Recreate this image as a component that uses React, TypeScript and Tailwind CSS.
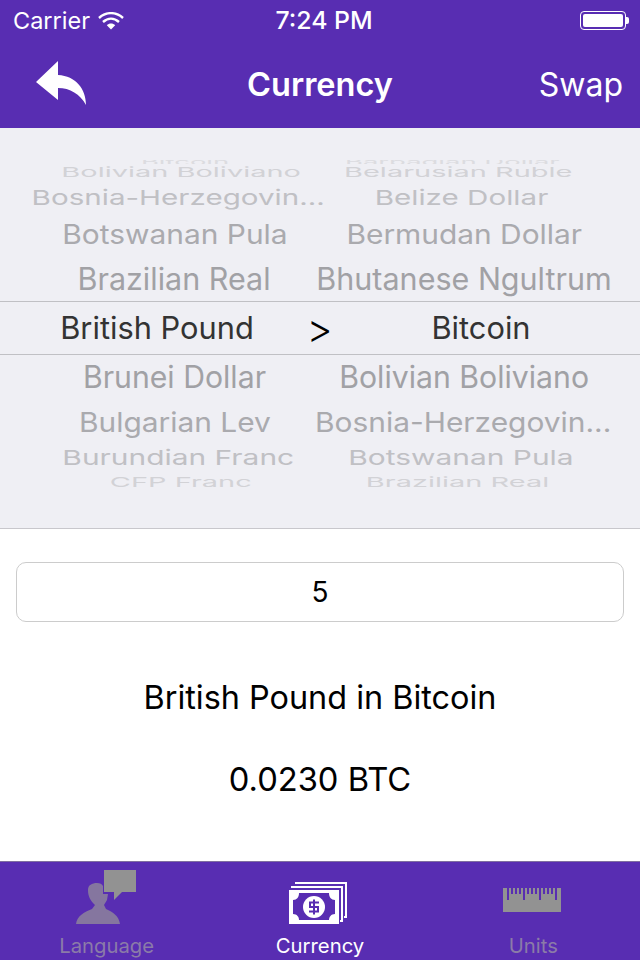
const rowsAbove = [
  { left: "Bitcoin", right: "Barbadian Dollar", row: "h-[4px]", text: "scale-x-[0.9] scale-y-[0.3] text-[#dcdce0]", l: "translate-x-[10px]", r: "-translate-x-[12px]" },
  { left: "Bolivian Boliviano", right: "Belarusian Ruble", row: "h-[16px]", text: "scale-x-[0.95] scale-y-[0.45] text-[#d2d2d6]", l: "translate-x-[6px]", r: "-translate-x-[6px]" },
  { left: "Bosnia-Herzegovin...", right: "Belize Dollar", row: "h-[36px]", text: "scale-x-[0.97] scale-y-[0.68] text-[#c0c0c4]", l: "translate-x-[3px]", r: "-translate-x-[3px]" },
  { left: "Botswanan Pula", right: "Bermudan Dollar", row: "h-[36px]", text: "scale-x-[0.98] scale-y-[0.88] text-[#aaaaae]", l: "", r: "" },
  { left: "Brazilian Real", right: "Bhutanese Ngultrum", row: "h-[44px] mt-[5px]", text: "text-[#a1a1a5]", l: "-translate-x-[1px]", r: "" },
];

const rowsBelow = [
  { left: "Brunei Dollar", right: "Bolivian Boliviano", row: "h-[44px]", text: "scale-x-[0.99] text-[#a1a1a5]", l: "-translate-x-[1px]", r: "" },
  { left: "Bulgarian Lev", right: "Bosnia-Herzegovin...", row: "h-[46px]", text: "scale-x-[0.98] scale-y-[0.9] text-[#aaaaae]", l: "", r: "-translate-x-[1px]" },
  { left: "Burundian Franc", right: "Botswanan Pula", row: "h-[26px]", text: "scale-x-[0.98] scale-y-[0.68] text-[#c0c0c4]", l: "translate-x-[3px]", r: "-translate-x-[3px]" },
  { left: "CFP Franc", right: "Brazilian Real", row: "h-[22px]", text: "scale-x-[0.95] scale-y-[0.45] text-[#d2d2d6]", l: "translate-x-[6px]", r: "-translate-x-[6px]" },
];

type Row = (typeof rowsAbove)[number];

const WheelRow = ({ row }: { row: Row }) => (
  <div className={`flex items-center overflow-hidden ${row.row}`}>
    <div className="w-1/2 flex justify-center pl-[30px] whitespace-nowrap">
      <span className={`text-[30.5px] leading-[34px] ${row.text} ${row.l}`}>{row.left}</span>
    </div>
    <div className="w-1/2 flex justify-center pr-[32px] whitespace-nowrap">
      <span className={`text-[30.5px] leading-[34px] ${row.text} ${row.r}`}>{row.right}</span>
    </div>
  </div>
);

const BackIcon = () => (
  <svg width="52" height="46" viewBox="0 0 52 46" fill="#fff">
    <path d="M0 21 L22 0 V14 C40 15 50 28 50 44 C44 33 34 27 22 27 V39 Z" />
  </svg>
);

const WifiIcon = () => (
  <svg width="26" height="18" viewBox="0 0 26 18" fill="none" stroke="#fff" strokeWidth="2.4">
    <path d="M1 6 C8 -0.5 18 -0.5 25 6" />
    <path d="M5 10 C10 5.5 16 5.5 21 10" />
    <path d="M13 17.5 L8.8 13.2 C11 11 15 11 17.2 13.2 Z" fill="#fff" stroke="none" />
  </svg>
);

const LanguageIcon = () => (
  <svg width="60" height="54" viewBox="76 870 60 54">
    <path
      fill="#85769f"
      d="M76 924 C77 916 84 912 92 909 L95 905 C90 900 88 896 88 890 C88 885 92 883 97 883 C100 883 102 884 103 886 V894 H108 L107 900 L104 905 L106 909 C113 912 119 916 120 924 Z"
    />
    <path fill="#929292" d="M104 870 H136 V892 H122 L114 900 V892 H104 Z" />
  </svg>
);

const CurrencyIcon = () => (
  <svg width="58" height="42" viewBox="289 882 58 42">
    <path fill="none" stroke="#fff" strokeWidth="2" d="M295 883 H346 V917 H344" />
    <path fill="none" stroke="#fff" strokeWidth="2" d="M291 887 H342 V921 H340" />
    <rect x="289" y="890" width="50" height="34" fill="#fff" />
    <path
      fill="#582db2"
      d="M299 893 H329 C329 897 331 900 335 900 V914 C331 914 329 917 329 920 H299 C299 917 297 914 293 914 V900 C297 900 299 897 299 893 Z"
    />
    <circle cx="314" cy="907" r="11" fill="#fff" />
    <path
      fill="none"
      stroke="#582db2"
      strokeWidth="2"
      d="M319 902.5 H310 V907 H318 V911.5 H309 M314 899.5 V914.5"
    />
  </svg>
);

const UnitsIcon = () => (
  <svg width="58" height="24" viewBox="0 0 58 24">
    <rect width="58" height="24" fill="#929292" />
    {[4, 20, 36, 52].map((x) => (
      <rect key={x} x={x} width="2" height="12" fill="#582db2" />
    ))}
    {[8, 12, 16, 24, 28, 32, 40, 44, 48].map((x) => (
      <rect key={x} x={x} width="2" height="6" fill="#582db2" />
    ))}
  </svg>
);

const App = () => {
  return (
    <div className="w-[640px] h-[960px] flex flex-col bg-white font-['Inter',sans-serif] overflow-hidden">
      <header className="h-[128px] bg-[#582db2] text-white shrink-0">
        <div className="h-[40px] grid grid-cols-3 items-center px-[13px] pt-[1px]">
          <div className="flex items-center gap-[8px]">
            <span className="text-[23.5px]">Carrier</span>
            <WifiIcon />
          </div>
          <span className="text-center text-[24.8px] font-medium whitespace-nowrap pl-[8px]">7:24 PM</span>
          <div className="flex justify-end items-center -mr-[2px]">
            <div className="w-[46px] h-[19px] border border-white rounded-[4px] p-[2px]">
              <div className="h-full bg-white rounded-[2px]" />
            </div>
            <div className="w-[3px] h-[7px] bg-white rounded-r-[2px]" />
          </div>
        </div>
        <div className="h-[88px] grid grid-cols-3 items-center px-[36px]">
          <BackIcon />
          <h1 className="text-center text-[32.5px] font-semibold whitespace-nowrap pt-[2px]">Currency</h1>
          <button className="text-right text-[32px] -mr-[19px] pt-[2px]">Swap</button>
        </div>
      </header>

      <section className="h-[401px] shrink-0 bg-[#efeff4] border-b border-[#c8c7cc] pt-[32px]">
        {rowsAbove.map((row) => (
          <WheelRow key={row.left} row={row} />
        ))}
        <div className="h-[54px] border-y border-[#c0c0c4] relative flex items-center text-[30.8px] text-[#333]">
          <div className="w-1/2 flex justify-center pr-[6px]">British Pound</div>
          <div className="w-1/2 flex justify-center pl-[2px]">Bitcoin</div>
          <span className="absolute left-0 right-[1px] -top-[3px] text-center text-[40px] font-light text-black">&gt;</span>
        </div>
        {rowsBelow.map((row) => (
          <WheelRow key={row.left} row={row} />
        ))}
      </section>

      <main className="flex-1 flex flex-col items-center px-[16px] pt-[33px]">
        <div className="w-full h-[60px] border border-[#cccccc] rounded-[10px] flex items-center justify-center text-[28px] text-black">
          5
        </div>
        <p className="mt-[58px] text-[32.4px] leading-[36px] text-black">British Pound in Bitcoin</p>
        <p className="mt-[45px] text-[32.7px] leading-[36px] text-black">0.0230 BTC</p>
      </main>

      <nav className="h-[99px] shrink-0 bg-[#582db2] border-t border-[#7f6f9f] grid grid-cols-3">
        <div className="flex flex-col items-center">
          <div className="h-[72px] pt-[8px] -ml-[2px]">
            <LanguageIcon />
          </div>
          <span className="text-[20.3px] leading-[24px] text-[#8b7ba8]">Language</span>
        </div>
        <div className="flex flex-col items-center">
          <div className="h-[72px] pt-[20px] -ml-[4px]">
            <CurrencyIcon />
          </div>
          <span className="text-[20.3px] leading-[24px] text-white">Currency</span>
        </div>
        <div className="flex flex-col items-center">
          <div className="h-[72px] pt-[26px] -ml-[2px]">
            <UnitsIcon />
          </div>
          <span className="text-[20.3px] leading-[24px] text-[#8b7ba8]">Units</span>
        </div>
      </nav>
    </div>
  );
};

export default App;
